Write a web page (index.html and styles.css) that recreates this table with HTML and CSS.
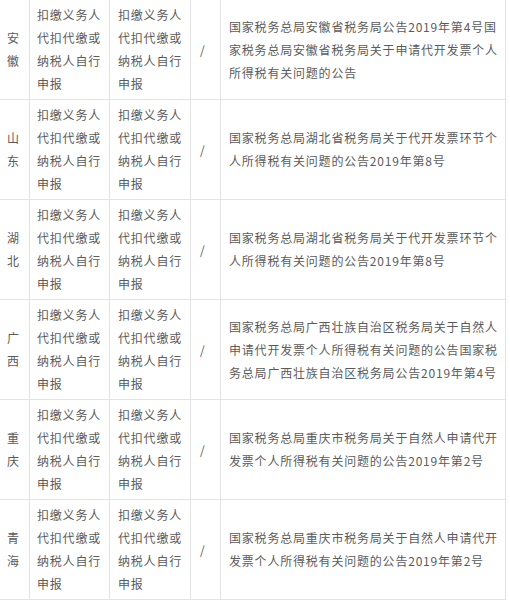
FILE: index.html
```html
<!DOCTYPE html>
<html lang="zh-CN">
<head>
<meta charset="utf-8">
<link rel="stylesheet" href="styles.css">
</head>
<body>
<table class="tax-table">
  <colgroup>
    <col class="c-prov">
    <col class="c-a">
    <col class="c-b">
    <col class="c-slash">
    <col class="c-doc">
  </colgroup>
  <tbody>
    <tr>
      <td class="prov">安徽</td>
      <td class="cell">扣缴义务人代扣代缴或纳税人自行申报</td>
      <td class="cell">扣缴义务人代扣代缴或纳税人自行申报</td>
      <td class="slash">/</td>
      <td class="doc">国家税务总局安徽省税务局公告2019年第4号国家税务总局安徽省税务局关于申请代开发票个人所得税有关问题的公告</td>
    </tr>
    <tr>
      <td class="prov">山东</td>
      <td class="cell">扣缴义务人代扣代缴或纳税人自行申报</td>
      <td class="cell">扣缴义务人代扣代缴或纳税人自行申报</td>
      <td class="slash">/</td>
      <td class="doc">国家税务总局湖北省税务局关于代开发票环节个人所得税有关问题的公告2019年第8号</td>
    </tr>
    <tr>
      <td class="prov">湖北</td>
      <td class="cell">扣缴义务人代扣代缴或纳税人自行申报</td>
      <td class="cell">扣缴义务人代扣代缴或纳税人自行申报</td>
      <td class="slash">/</td>
      <td class="doc">国家税务总局湖北省税务局关于代开发票环节个人所得税有关问题的公告2019年第8号</td>
    </tr>
    <tr>
      <td class="prov">广西</td>
      <td class="cell">扣缴义务人代扣代缴或纳税人自行申报</td>
      <td class="cell">扣缴义务人代扣代缴或纳税人自行申报</td>
      <td class="slash">/</td>
      <td class="doc">国家税务总局广西壮族自治区税务局关于自然人申请代开发票个人所得税有关问题的公告国家税务总局广西壮族自治区税务局公告2019年第4号</td>
    </tr>
    <tr>
      <td class="prov">重庆</td>
      <td class="cell">扣缴义务人代扣代缴或纳税人自行申报</td>
      <td class="cell">扣缴义务人代扣代缴或纳税人自行申报</td>
      <td class="slash">/</td>
      <td class="doc">国家税务总局重庆市税务局关于自然人申请代开发票个人所得税有关问题的公告2019年第2号</td>
    </tr>
    <tr>
      <td class="prov">青海</td>
      <td class="cell">扣缴义务人代扣代缴或纳税人自行申报</td>
      <td class="cell">扣缴义务人代扣代缴或纳税人自行申报</td>
      <td class="slash">/</td>
      <td class="doc">国家税务总局重庆市税务局关于自然人申请代开发票个人所得税有关问题的公告2019年第2号</td>
    </tr>
  </tbody>
</table>
</body>
</html>
```
FILE: styles.css
```css
html, body {
  margin: 0;
  padding: 0;
  background: #ffffff;
}

.tax-table {
  table-layout: fixed;
  width: 506px;
  border-collapse: separate;
  border-spacing: 0;
  font-family: "Noto Sans CJK SC", "Noto Sans", sans-serif;
  font-size: 12px;
  letter-spacing: 0.8px;
  line-height: 23px;
  color: #5b5b5b;
}

.c-prov { width: 30px; }
.c-a { width: 80px; }
.c-b { width: 81px; }
.c-slash { width: 30px; }
.c-doc { width: 285px; }

.tax-table td {
  box-sizing: border-box;
  border-right: 1px solid #e3e3e3;
  border-bottom: 1px solid #e3e3e3;
  padding: 3px 4px 4px 8px;
  vertical-align: middle;
  text-align: left;
  word-break: break-all;
}

.tax-table td.prov {
  padding-left: 7px;
}

.tax-table td.cell:nth-child(2) {
  padding-left: 7px;
}

.tax-table td.slash {
  padding-left: 9px;
}
```
